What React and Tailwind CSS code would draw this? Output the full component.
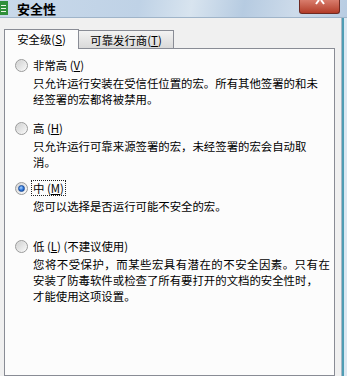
import React from "react";

const font = { fontFamily: '"Noto Sans CJK SC", "Noto Sans", sans-serif' };

function Radio({ checked }) {
  return (
    <div className="w-[13px] h-[13px] rounded-full border border-[#9a9b9b] bg-gradient-to-br from-[#d6d6d6] to-[#fbfbfb] flex items-center justify-center shrink-0">
      {checked ? (
        <div className="w-[7px] h-[7px] rounded-full bg-[radial-gradient(circle_at_40%_35%,#a9d3ff,#2a72d8_55%,#0d3f8f)] border border-[#1d4f9c]" />
      ) : (
        <div className="w-[9px] h-[9px] rounded-full bg-gradient-to-br from-[#d2d3d3] to-[#f6f6f6]" />
      )}
    </div>
  );
}

function Label({ children, focus }) {
  return (
    <div className="flex items-center h-[14px]">
      <div className="w-[10px]" />
      <Radio checked={focus} />
      <div
        className={
          "ml-[4px] text-[11.4px] leading-[14px] text-black whitespace-nowrap px-[1px] " +
          (focus ? "outline outline-1 outline-dotted outline-[#222]" : "")
        }
      >
        {children}
      </div>
    </div>
  );
}

function Desc({ lines, className }) {
  return (
    <div className={"ml-[28px] text-[11.4px] leading-[16px] text-black " + (className || "")}>
      {lines.map((l, i) => (
        <div key={i} className={"whitespace-nowrap " + (l.cls || "")}>
          {l.t}
        </div>
      ))}
    </div>
  );
}

export default function App() {
  return (
    <div className="w-[347px] h-[376px] overflow-hidden flex flex-col bg-[#f0f0f0]" style={font}>
      {/* Title bar */}
      <div className="h-[18px] shrink-0 flex items-start bg-[linear-gradient(100deg,#c9d9ea_0%,#bfd2e6_40%,#d8e4ef_55%,#b6cbe1_70%,#cddbea_85%,#b8cce2_100%)] border-b border-[#9fb4c9]">
        <div className="w-[8px] h-[14px] mt-[1px] bg-[#2f8f3a] flex flex-col justify-center gap-[2px] pl-[1px]">
          <div className="h-[1px] w-[5px] bg-[#e9f6e4]" />
          <div className="h-[1px] w-[5px] bg-[#e9f6e4]" />
          <div className="h-[1px] w-[5px] bg-[#e9f6e4]" />
        </div>
        <div className="ml-[9px] h-[17px] flex items-center text-[13px] leading-[17px] font-bold text-black">安全性</div>
        <div className="flex-1" />
        <div className="w-[41px] h-[14px] mr-[7px] rounded-b-[3px] border border-t-0 border-[#6e2a22] bg-gradient-to-b from-[#d87c6c] to-[#b23b27] flex items-start justify-center">
          <svg width="12" height="5" viewBox="0 0 12 5">
            <path d="M5 0 L2 4 M7 0 L10 4" stroke="#fff" strokeWidth="2" fill="none" />
          </svg>
        </div>
      </div>

      {/* Body */}
      <div className="flex-1 flex">
        <div className="flex-1 flex flex-col pl-[4px] pt-[10px] pr-[6px]">
          {/* Tabs */}
          <div className="flex items-end h-[20px]">
            <div className="w-[75px] h-[20px] bg-[#fcfcfc] border border-b-0 border-[#898c95] flex items-center justify-center text-[11.4px] leading-[14px] text-black relative z-10 -mb-[1px] pb-[1px]">
              安全级(<u>S</u>)
            </div>
            <div className="w-[96px] h-[18px] -ml-[1px] bg-gradient-to-b from-[#f3f3f3] to-[#d9d9d9] border border-b-0 border-[#898c95] flex items-center justify-center text-[11.4px] leading-[14px] text-black">
              可靠发行商(<u>T</u>)
            </div>
          </div>
          {/* Panel */}
          <div className="flex-1 bg-[#fcfcfc] border border-[#898c95] flex flex-col">
            <div className="mt-[9px]">
              <Label>
                非常高 (<u>V</u>)
              </Label>
              <Desc
                className="mt-[3px]"
                lines={[
                  { t: "只允许运行安装在受信任位置的宏。所有其他签署的和未" },
                  { t: "经签署的宏都将被禁用。" },
                ]}
              />
            </div>
            <div className="mt-[14px]">
              <Label>
                高 (<u>H</u>)
              </Label>
              <Desc
                className="mt-[3px]"
                lines={[
                  { t: "只允许运行可靠来源签署的宏，未经签署的宏会自动取" },
                  { t: "消。" },
                ]}
              />
            </div>
            <div className="mt-[11px]">
              <Label focus>
                中 (<u>M</u>)
              </Label>
              <Desc className="mt-[3px]" lines={[{ t: "您可以选择是否运行可能不安全的宏。" }]} />
            </div>
            <div className="mt-[25px]">
              <Label>
                低 (<u>L</u>) (不建议使用)
              </Label>
              <Desc
                className="mt-[3px]"
                lines={[
                  { t: "您将不受保护，而某些宏具有潜在的不安全因素。只有在", cls: "tracking-[0.5px]" },
                  { t: "安装了防毒软件或检查了所有要打开的文档的安全性时，" },
                  { t: "才能使用这项设置。" },
                ]}
              />
            </div>
          </div>
        </div>
        {/* Right frame */}
        <div className="w-[6px] flex">
          <div className="w-[1px] bg-[#a9b8c6]" />
          <div className="w-[2px] bg-[#4f9db4]" />
          <div className="flex-1 bg-[#dbe8f2]" />
        </div>
      </div>
    </div>
  );
}
